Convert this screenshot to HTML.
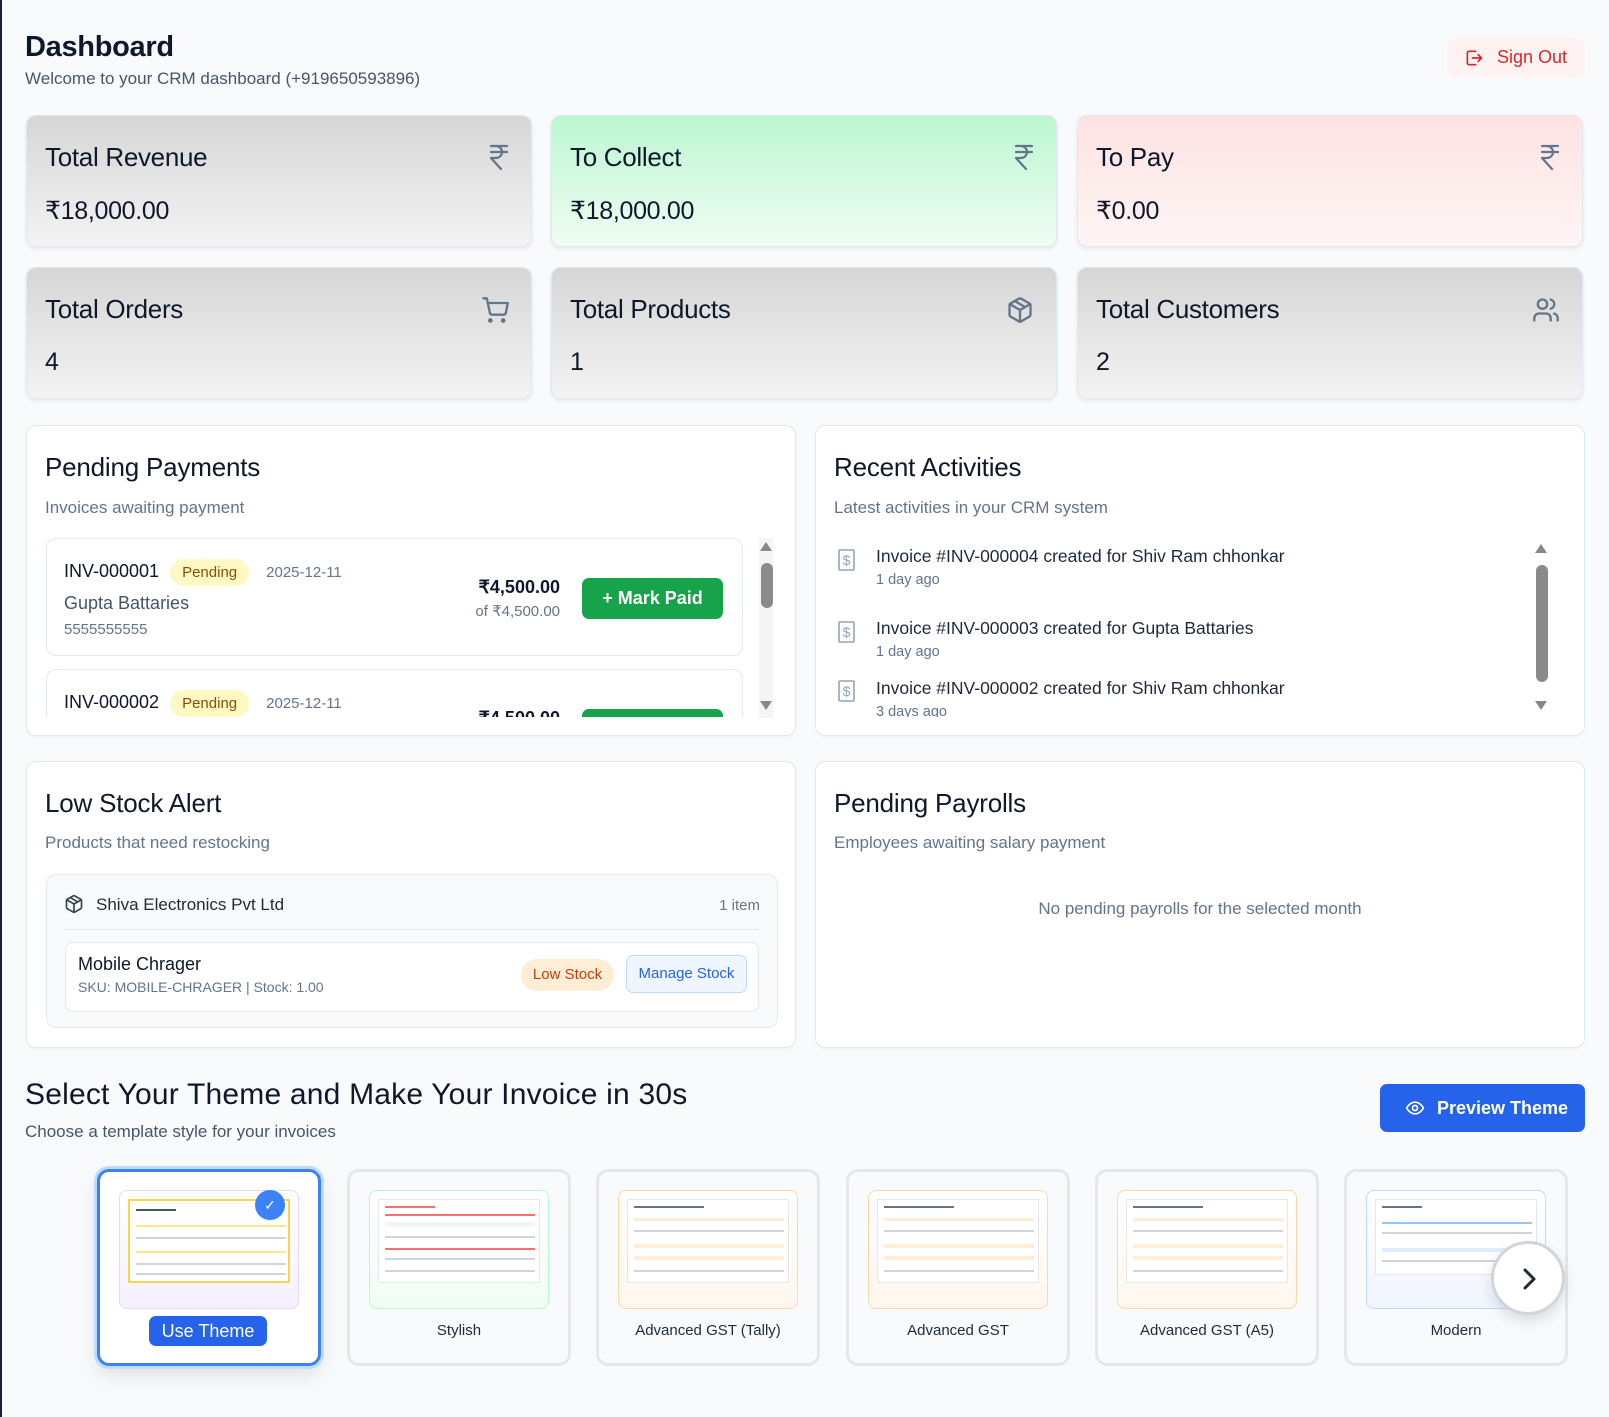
<!DOCTYPE html>
<html><head><meta charset="utf-8"><style>
*{box-sizing:border-box;margin:0;padding:0}
body{width:1609px;height:1417px;background:#f8fafc;font-family:"Liberation Sans",sans-serif;color:#0f172a;position:relative;overflow:hidden}
.a{position:absolute}
.card{position:absolute;width:506px;height:132px;border-radius:10px;border:1px solid #e2e8f0;box-shadow:0 2px 4px rgba(0,0,0,.08)}
.gray{background:linear-gradient(#d6d6d6,#f3f3f3)}
.card .t{position:absolute;left:18px;top:26px;font-size:26px;letter-spacing:-.3px}
.card .v{position:absolute;left:18px;top:80px;font-size:25px;letter-spacing:-.3px}
.card svg{position:absolute;right:22px;top:28px}
.panel{position:absolute;background:#fff;border:1px solid #e2e8f0;border-radius:10px;box-shadow:0 1px 2px rgba(0,0,0,.04)}
.ptitle{position:absolute;left:18px;font-size:26px;letter-spacing:-.2px}
.psub{position:absolute;left:18px;font-size:17px;color:#64748b}
.pill{display:inline-block;background:#fef9c3;color:#854d0e;border-radius:14px;padding:5px 12px;font-size:15px}
.tc{position:absolute;top:1169px;width:224px;height:197px;border:3px solid #e5e7eb;border-radius:12px;background:#f8fafc}
.tc .th{position:absolute;left:19px;top:18px;width:180px;height:119px;border-radius:8px;border:1px solid;overflow:hidden}
.tc .doc{position:absolute;left:8px;top:8px;right:8px;height:84px;background:#fff;border:1px solid #e5e7eb}
.tc .lab{position:absolute;left:0;right:0;top:150px;text-align:center;font-size:15px;color:#1e293b}
.ln{position:absolute;height:2px;background:#d1d5db}
</style></head><body>
<div class="a" style="left:0;top:0;width:2px;height:1417px;background:#1e1b3a"></div>
<div class="a" style="left:25px;top:31px;font-size:29px;font-weight:bold;letter-spacing:-.3px">Dashboard</div>
<div class="a" style="left:25px;top:69px;font-size:17px;color:#475569">Welcome to your CRM dashboard (+919650593896)</div>
<div class="a" style="left:1447px;top:37px;width:138px;height:41px;background:#fef2f2;border-radius:10px;color:#dc2626;font-size:18px">
<svg class="a" style="left:17px;top:11px" width="20" height="20" viewBox="0 0 24 24" fill="none" stroke="#dc2626" stroke-width="2" stroke-linecap="round" stroke-linejoin="round"><path d="M14 4H6a2 2 0 0 0-2 2v12a2 2 0 0 0 2 2h8"/><path d="M10 12h11M17 8l4 4-4 4"/></svg>
<span class="a" style="left:50px;top:10px">Sign Out</span></div>

<div class="card gray" style="left:26px;top:115px"><div class="t">Total Revenue</div><div class="v">₹18,000.00</div>
<svg width="20" height="26" viewBox="0 0 20 26" fill="none" stroke="#64748b" stroke-width="2.2" stroke-linecap="round" stroke-linejoin="round"><path d="M2 2h16M2 8h16M2 2h5a6 6 0 0 1 0 12H2l10 11"/></svg></div>
<div class="card" style="left:551px;top:115px;background:linear-gradient(#bbf7d0,#f0fdf4)"><div class="t">To Collect</div><div class="v">₹18,000.00</div>
<svg width="20" height="26" viewBox="0 0 20 26" fill="none" stroke="#64748b" stroke-width="2.2" stroke-linecap="round" stroke-linejoin="round"><path d="M2 2h16M2 8h16M2 2h5a6 6 0 0 1 0 12H2l10 11"/></svg></div>
<div class="card" style="left:1077px;top:115px;background:linear-gradient(#fee2e2,#fff5f5)"><div class="t">To Pay</div><div class="v">₹0.00</div>
<svg width="20" height="26" viewBox="0 0 20 26" fill="none" stroke="#64748b" stroke-width="2.2" stroke-linecap="round" stroke-linejoin="round"><path d="M2 2h16M2 8h16M2 2h5a6 6 0 0 1 0 12H2l10 11"/></svg></div>

<div class="card gray" style="left:26px;top:267px"><div class="t">Total Orders</div><div class="v">4</div>
<svg width="28" height="28" viewBox="0 0 24 24" fill="none" stroke="#64748b" stroke-width="2" stroke-linecap="round" stroke-linejoin="round"><circle cx="8" cy="21" r="1"/><circle cx="19" cy="21" r="1"/><path d="M2 2h3l2.6 12.4a2 2 0 0 0 2 1.6h9.7a2 2 0 0 0 2-1.6L23 6H6"/></svg></div>
<div class="card gray" style="left:551px;top:267px"><div class="t">Total Products</div><div class="v">1</div>
<svg width="28" height="28" viewBox="0 0 24 24" fill="none" stroke="#64748b" stroke-width="2" stroke-linecap="round" stroke-linejoin="round"><path d="M21 8a2 2 0 0 0-1-1.7l-7-4a2 2 0 0 0-2 0l-7 4A2 2 0 0 0 3 8v8a2 2 0 0 0 1 1.7l7 4a2 2 0 0 0 2 0l7-4a2 2 0 0 0 1-1.7Z"/><path d="M3.3 7 12 12l8.7-5M12 22V12M7.5 4.3l9 5.2"/></svg></div>
<div class="card gray" style="left:1077px;top:267px"><div class="t">Total Customers</div><div class="v">2</div>
<svg width="28" height="28" viewBox="0 0 24 24" fill="none" stroke="#64748b" stroke-width="2" stroke-linecap="round" stroke-linejoin="round"><path d="M16 21v-2a4 4 0 0 0-4-4H6a4 4 0 0 0-4 4v2"/><circle cx="9" cy="7" r="4"/><path d="M22 21v-2a4 4 0 0 0-3-3.9M16 3.1a4 4 0 0 1 0 7.8"/></svg></div>

<div class="panel" style="left:26px;top:425px;width:770px;height:311px;overflow:hidden">
<div class="ptitle" style="top:26px">Pending Payments</div>
<div class="psub" style="top:72px">Invoices awaiting payment</div>
<div class="a" style="left:19px;top:112px;width:697px;height:118px;border:1px solid #e2e8f0;border-radius:10px">
 <div class="a" style="left:17px;top:20px;font-size:18px;white-space:nowrap">INV-000001 <span class="pill" style="margin-left:6px">Pending</span> <span style="color:#64748b;font-size:15px;margin-left:12px">2025-12-11</span></div>
 <div class="a" style="left:17px;top:54px;font-size:18px;color:#475569">Gupta Battaries</div>
 <div class="a" style="left:17px;top:82px;font-size:15px;color:#64748b">5555555555</div>
 <div class="a" style="right:182px;top:38px;font-size:18px;font-weight:bold;text-align:right">₹4,500.00</div>
 <div class="a" style="right:182px;top:63px;font-size:15px;color:#64748b">of ₹4,500.00</div>
 <div class="a" style="left:535px;top:39px;width:141px;height:41px;background:#16a34a;border-radius:7px;color:#fff;font-size:18px;font-weight:bold;text-align:center;line-height:41px">+ Mark Paid</div>
</div>
<div class="a" style="left:19px;top:243px;width:697px;height:118px;border:1px solid #e2e8f0;border-radius:10px">
 <div class="a" style="left:17px;top:20px;font-size:18px;white-space:nowrap">INV-000002 <span class="pill" style="margin-left:6px">Pending</span> <span style="color:#64748b;font-size:15px;margin-left:12px">2025-12-11</span></div>
 <div class="a" style="right:182px;top:38px;font-size:18px;font-weight:bold">₹4,500.00</div>
 <div class="a" style="left:535px;top:39px;width:141px;height:41px;background:#16a34a;border-radius:7px"></div>
</div>
<div class="a" style="left:0;top:291px;width:770px;height:30px;background:#fff"></div>
<div class="a" style="left:732px;top:112px;width:14px;height:180px;background:#f5f5f5"></div>
<div class="a" style="left:733px;top:116px;border:6px solid transparent;border-bottom:9px solid #888;border-top:0"></div>
<div class="a" style="left:734px;top:137px;width:12px;height:45px;background:#8a8a8a;border-radius:6px"></div>
<div class="a" style="left:733px;top:275px;border:6px solid transparent;border-top:9px solid #888;border-bottom:0"></div>
</div>

<div class="panel" style="left:815px;top:425px;width:770px;height:311px;overflow:hidden">
<div class="ptitle" style="top:26px">Recent Activities</div>
<div class="psub" style="top:72px">Latest activities in your CRM system</div>
<svg class="a" style="left:22px;top:123px" width="17" height="22" viewBox="0 0 17 22" fill="none" stroke="#94a3b8" stroke-width="1.6"><rect x="1" y="1" width="15" height="20" rx="1"/><text x="8.5" y="16" font-size="14" text-anchor="middle" fill="#94a3b8" stroke="none" font-family="Liberation Sans">$</text></svg>
<svg class="a" style="left:22px;top:195px" width="17" height="22" viewBox="0 0 17 22" fill="none" stroke="#94a3b8" stroke-width="1.6"><rect x="1" y="1" width="15" height="20" rx="1"/><text x="8.5" y="16" font-size="14" text-anchor="middle" fill="#94a3b8" stroke="none" font-family="Liberation Sans">$</text></svg>
<svg class="a" style="left:22px;top:254px" width="17" height="22" viewBox="0 0 17 22" fill="none" stroke="#94a3b8" stroke-width="1.6"><rect x="1" y="1" width="15" height="20" rx="1"/><text x="8.5" y="16" font-size="14" text-anchor="middle" fill="#94a3b8" stroke="none" font-family="Liberation Sans">$</text></svg>
<div class="a" style="left:60px;top:120px;font-size:17.5px;color:#1e293b">Invoice #INV-000004 created for Shiv Ram chhonkar</div>
<div class="a" style="left:60px;top:146px;font-size:14.5px;color:#64748b">1 day ago</div>
<div class="a" style="left:60px;top:192px;font-size:17.5px;color:#1e293b">Invoice #INV-000003 created for Gupta Battaries</div>
<div class="a" style="left:60px;top:218px;font-size:14.5px;color:#64748b">1 day ago</div>
<div class="a" style="left:60px;top:252px;font-size:17.5px;color:#1e293b">Invoice #INV-000002 created for Shiv Ram chhonkar</div>
<div class="a" style="left:60px;top:278px;font-size:14.5px;color:#64748b">3 days ago</div>
<div class="a" style="left:0;top:291px;width:770px;height:30px;background:#fff"></div>
<div class="a" style="left:719px;top:118px;border:6px solid transparent;border-bottom:9px solid #888;border-top:0"></div>
<div class="a" style="left:720px;top:139px;width:12px;height:117px;background:#8a8a8a;border-radius:6px"></div>
<div class="a" style="left:719px;top:275px;border:6px solid transparent;border-top:9px solid #888;border-bottom:0"></div>
</div>

<div class="panel" style="left:26px;top:761px;width:770px;height:287px">
<div class="ptitle" style="top:26px">Low Stock Alert</div>
<div class="psub" style="top:71px">Products that need restocking</div>
<div class="a" style="left:19px;top:112px;width:732px;height:154px;background:#f8fafc;border:1px solid #e2e8f0;border-radius:10px">
 <svg class="a" style="left:17px;top:19px" width="20" height="20" viewBox="0 0 24 24" fill="none" stroke="#334155" stroke-width="2" stroke-linecap="round" stroke-linejoin="round"><path d="M21 8a2 2 0 0 0-1-1.7l-7-4a2 2 0 0 0-2 0l-7 4A2 2 0 0 0 3 8v8a2 2 0 0 0 1 1.7l7 4a2 2 0 0 0 2 0l7-4a2 2 0 0 0 1-1.7Z"/><path d="M3.3 7 12 12l8.7-5M12 22V12M7.5 4.3l9 5.2"/></svg>
 <div class="a" style="left:49px;top:20px;font-size:17px;color:#1e293b">Shiva Electronics Pvt Ltd</div>
 <div class="a" style="right:17px;top:22px;font-size:15px;color:#64748b">1 item</div>
 <div class="a" style="left:18px;right:18px;top:54px;height:1px;background:#e2e8f0"></div>
 <div class="a" style="left:18px;top:67px;width:694px;height:70px;background:#fff;border:1px solid #e2e8f0;border-radius:8px">
  <div class="a" style="left:12px;top:11px;font-size:18px">Mobile Chrager</div>
  <div class="a" style="left:12px;top:36px;font-size:14px;color:#64748b">SKU: MOBILE-CHRAGER | Stock: 1.00</div>
  <div class="a" style="left:455px;top:16px;width:93px;height:32px;background:#ffedd5;color:#c2410c;border-radius:16px;font-size:15px;text-align:center;line-height:32px">Low Stock</div>
  <div class="a" style="left:560px;top:12px;width:121px;height:38px;background:#eff6ff;border:1px solid #bfdbfe;color:#2563eb;border-radius:7px;font-size:15px;text-align:center;line-height:36px">Manage Stock</div>
 </div>
</div>
</div>

<div class="panel" style="left:815px;top:761px;width:770px;height:287px">
<div class="ptitle" style="top:26px">Pending Payrolls</div>
<div class="psub" style="top:71px">Employees awaiting salary payment</div>
<div class="a" style="left:0;right:0;top:137px;text-align:center;font-size:17px;color:#64748b">No pending payrolls for the selected month</div>
</div>

<div class="a" style="left:25px;top:1078px;font-size:30px;letter-spacing:.2px">Select Your Theme and Make Your Invoice in 30s</div>
<div class="a" style="left:25px;top:1122px;font-size:17px;color:#475569">Choose a template style for your invoices</div>
<div class="a" style="left:1380px;top:1084px;width:205px;height:48px;background:#2563eb;border-radius:7px;color:#fff;font-size:18px;font-weight:bold">
<svg class="a" style="left:24px;top:14px" width="22" height="20" viewBox="0 0 24 24" fill="none" stroke="#fff" stroke-width="2"><path d="M2 12s3.5-7 10-7 10 7 10 7-3.5 7-10 7S2 12 2 12Z"/><circle cx="12" cy="12" r="3"/></svg>
<span class="a" style="left:57px;top:14px">Preview Theme</span></div>

<div class="tc" style="left:97px;border-color:#3b82f6;background:#fff;box-shadow:0 0 0 3px #bfdbfe,0 10px 20px rgba(0,0,0,.1)">
 <div class="th" style="border-color:#e9d5ff;background:linear-gradient(#fff,#f5f0ff)"><div class="doc" style="border:2px solid #fcd34d">
  <div class="ln" style="left:6px;top:8px;width:40px;background:#475569"></div><div class="ln" style="left:6px;top:24px;width:150px;background:#fde68a"></div><div class="ln" style="left:6px;top:36px;width:150px"></div><div class="ln" style="left:6px;top:50px;width:150px;background:#fde68a"></div><div class="ln" style="left:6px;top:62px;width:150px"></div><div class="ln" style="left:6px;top:72px;width:150px"></div></div></div>
 <div class="a" style="left:155px;top:18px;width:30px;height:30px;border-radius:50%;background:#3b82f6;color:#fff;font-size:14px;text-align:center;line-height:30px">✓</div>
 <div class="a" style="left:49px;top:144px;width:118px;height:30px;background:#2563eb;border-radius:7px;color:#fff;font-size:18px;text-align:center;line-height:30px">Use Theme</div>
</div>
<div class="tc" style="left:347px"><div class="th" style="border-color:#bbf7d0;background:linear-gradient(#fff,#f0fdf4)"><div class="doc"><div class="ln" style="left:6px;top:6px;width:50px;background:#f87171"></div><div class="ln" style="left:6px;top:14px;width:150px;background:#f87171"></div><div class="ln" style="left:6px;top:22px;width:150px;height:5px;background:#f1f5f9"></div><div class="ln" style="left:6px;top:36px;width:150px"></div><div class="ln" style="left:6px;top:48px;width:150px;background:#f87171"></div><div class="ln" style="left:6px;top:58px;width:150px"></div><div class="ln" style="left:6px;top:70px;width:150px"></div></div></div><div class="lab">Stylish</div></div>
<div class="tc" style="left:596px"><div class="th" style="border-color:#fed7aa;background:linear-gradient(#fff,#fff7ed)"><div class="doc"><div class="ln" style="left:6px;top:6px;width:70px;background:#64748b"></div><div class="ln" style="left:6px;top:18px;width:150px;background:#ffedd5;height:3px"></div><div class="ln" style="left:6px;top:30px;width:150px"></div><div class="ln" style="left:6px;top:44px;width:150px;background:#ffedd5;height:4px"></div><div class="ln" style="left:6px;top:56px;width:150px;background:#ffedd5;height:4px"></div><div class="ln" style="left:6px;top:70px;width:150px"></div></div></div><div class="lab">Advanced GST (Tally)</div></div>
<div class="tc" style="left:846px"><div class="th" style="border-color:#fed7aa;background:linear-gradient(#fff,#fff7ed)"><div class="doc"><div class="ln" style="left:6px;top:6px;width:70px;background:#64748b"></div><div class="ln" style="left:6px;top:18px;width:150px;background:#ffedd5;height:3px"></div><div class="ln" style="left:6px;top:30px;width:150px"></div><div class="ln" style="left:6px;top:44px;width:150px;background:#ffedd5;height:4px"></div><div class="ln" style="left:6px;top:56px;width:150px;background:#ffedd5;height:4px"></div><div class="ln" style="left:6px;top:70px;width:150px"></div></div></div><div class="lab">Advanced GST</div></div>
<div class="tc" style="left:1095px"><div class="th" style="border-color:#fed7aa;background:linear-gradient(#fff,#fff7ed)"><div class="doc"><div class="ln" style="left:6px;top:6px;width:70px;background:#64748b"></div><div class="ln" style="left:6px;top:18px;width:150px;background:#ffedd5;height:3px"></div><div class="ln" style="left:6px;top:30px;width:150px"></div><div class="ln" style="left:6px;top:44px;width:150px;background:#ffedd5;height:4px"></div><div class="ln" style="left:6px;top:56px;width:150px;background:#ffedd5;height:4px"></div><div class="ln" style="left:6px;top:70px;width:150px"></div></div></div><div class="lab">Advanced GST (A5)</div></div>
<div class="tc" style="left:1344px"><div class="th" style="border-color:#bfdbfe;background:linear-gradient(#fff,#f1f5ff)"><div class="doc" style="height:76px"><div class="ln" style="left:6px;top:6px;width:40px;background:#64748b"></div><div class="ln" style="left:6px;top:22px;width:150px;background:#93c5fd"></div><div class="ln" style="left:6px;top:32px;width:150px"></div><div class="ln" style="left:6px;top:48px;width:150px;background:#e0ecff;height:4px"></div><div class="ln" style="left:6px;top:60px;width:150px"></div></div></div><div class="lab">Modern</div></div>
<div class="a" style="left:1491px;top:1241px;width:74px;height:74px;border-radius:50%;background:#fff;border:3px solid #d1d5db;box-shadow:0 6px 14px rgba(0,0,0,.12)">
<svg class="a" style="left:24px;top:22px" width="22" height="26" viewBox="0 0 22 26" fill="none" stroke="#1e293b" stroke-width="3" stroke-linecap="round" stroke-linejoin="round"><path d="M7 4l9 9-9 9"/></svg></div>
</body></html>
